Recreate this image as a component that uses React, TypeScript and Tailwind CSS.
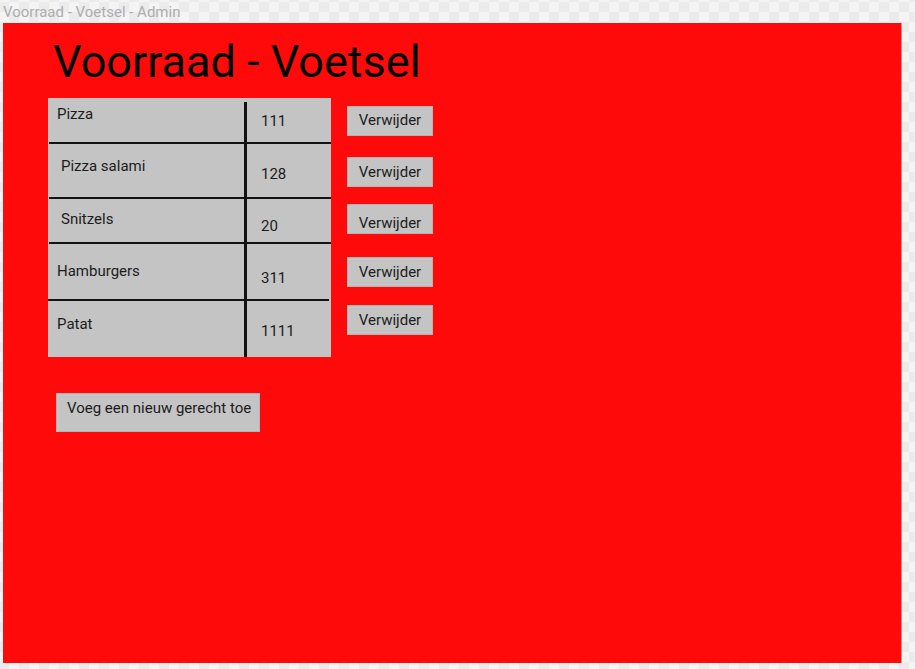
import React from "react";

const rows = [
  { name: "Pizza", qty: "111", row: "h-[44px]", name_: "pl-[9px] pt-[9px]", qty_: "pt-[16px]", line: "mt-[4px]", div: "ml-[1px]" },
  { name: "Pizza salami", qty: "128", row: "h-[53px]", name_: "pl-[13px] pt-[15px]", qty_: "pt-[23px]", line: "", div: "ml-[1px]" },
  { name: "Snitzels", qty: "20", row: "h-[43px]", name_: "pl-[13px] pt-[13px]", qty_: "pt-[20px]", line: "", div: "ml-[1px]" },
  { name: "Hamburgers", qty: "311", row: "h-[55px]", name_: "pl-[9px] pt-[20px]", qty_: "pt-[27px]", line: "", div: "mr-[2px]" },
  { name: "Patat", qty: "1111", row: "h-[56px]", name_: "pl-[9px] pt-[16px]", qty_: "pt-[23px]", line: "", div: "" },
];

const buttons = [
  { mt: "mt-[8px]", pt: "pt-[6px]" },
  { mt: "mt-[21px]", pt: "pt-[7px]" },
  { mt: "mt-[17px]", pt: "pt-[11px]" },
  { mt: "mt-[23px]", pt: "pt-[7px]" },
  { mt: "mt-[18px]", pt: "pt-[7px]" },
];

export default function App() {
  return (
    <div className="w-[915px] h-[669px] overflow-hidden font-[Roboto,Arial,sans-serif] bg-[#f3f3f3] bg-[image:repeating-conic-gradient(#ebebeb_0_25%,#f4f4f4_0_50%)] bg-[length:20px_20px] bg-[position:9px_2px]">
      <div className="h-[23px] pl-[3px] pt-[5px] text-[15px] leading-[15px] text-[#adadad] whitespace-nowrap">
        Voorraad - Voetsel - Admin
      </div>
      <div className="ml-[3px] w-[899px] h-[640px] bg-[#fe0a0a] border-r border-r-[#ff8080] pl-[45px] pt-[16px]">
        <h1 className="pl-[5px] text-[45px] leading-[45px] text-black font-normal whitespace-nowrap">
          Voorraad - Voetsel
        </h1>
        <div className="mt-[14px] flex items-start">
          <div className="w-[283px] bg-[#c4c4c4] text-[15px] leading-[15px] text-[#1c1c1c]">
            {rows.map((r, i) => (
              <React.Fragment key={r.name}>
                <div className={`flex ${r.row}`}>
                  <div className={`w-[196px] whitespace-nowrap ${r.name_}`}>{r.name}</div>
                  <div className={`w-[3px] bg-[#121212] ${r.line}`} />
                  <div className={`flex-1 pl-[14px] ${r.qty_}`}>{r.qty}</div>
                </div>
                {i < rows.length - 1 && <div className={`h-[2px] bg-[#121212] ${r.div}`} />}
              </React.Fragment>
            ))}
          </div>
          <div className="ml-[16px] flex flex-col">
            {buttons.map((b, i) => (
              <div
                key={i}
                className={`w-[86px] h-[30px] bg-[#c4c4c4] border border-[#b4b4b4] text-center text-[15px] leading-[15px] text-[#1c1c1c] ${b.mt} ${b.pt}`}
              >
                Verwijder
              </div>
            ))}
          </div>
        </div>
        <div className="mt-[36px] ml-[8px] w-[204px] h-[39px] bg-[#c4c4c4] border border-[#b4b4b4] pl-[10px] pt-[7px] text-[15px] leading-[15px] text-[#1c1c1c] whitespace-nowrap">
          Voeg een nieuw gerecht toe
        </div>
      </div>
    </div>
  );
}
